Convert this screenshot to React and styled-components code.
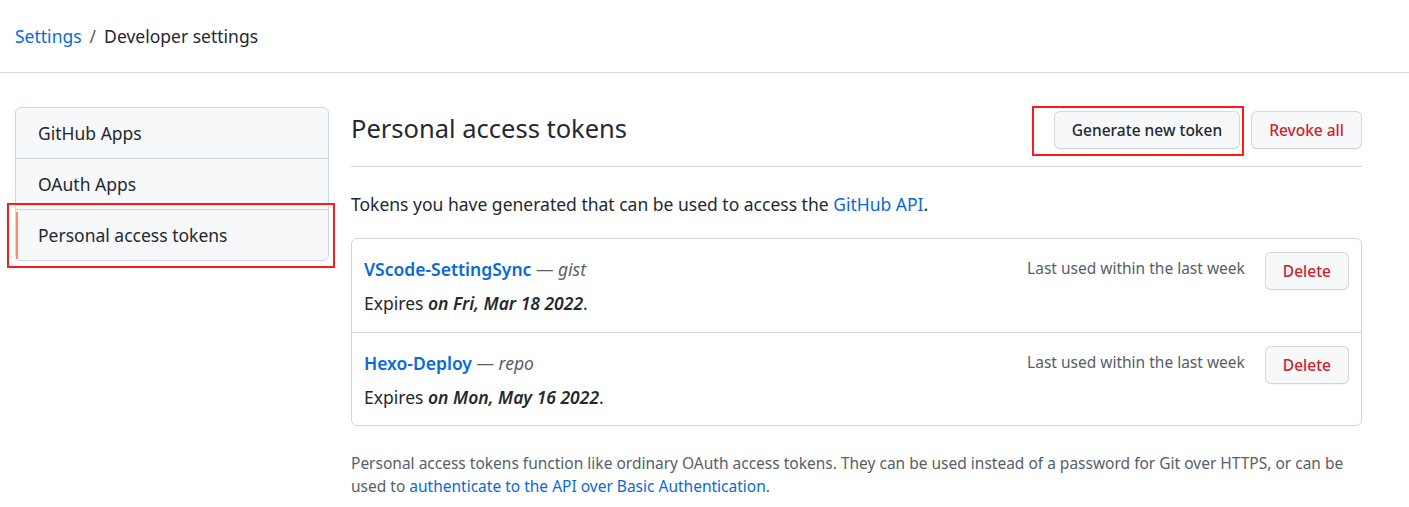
import React from 'react'
import styled, { createGlobalStyle } from 'styled-components'

const GlobalStyle = createGlobalStyle`
  body {
    margin: 0;
    background: #fff;
    font-family: "Noto Sans", "Open Sans", sans-serif;
    color: #24292f;
  }
`

const Header = styled.div`
  height: 72px;
  border-bottom: 1px solid #d0d7de;
  display: flex;
  align-items: center;
  padding-left: 15px;
  font-size: 17.5px;
`

const Crumb = styled.a`
  color: #0969da;
  text-decoration: none;
`

const Sep = styled.span`
  color: #57606a;
  margin: 0 8px;
`

const Layout = styled.div`
  display: flex;
  gap: 22px;
  padding: 34px 47px 0 15px;
`

const SideWrap = styled.div`
  position: relative;
  flex-shrink: 0;
`

const SideNav = styled.nav`
  width: 312px;
  border: 1px solid #d0d7de;
  border-radius: 6px;
  background: #f6f8fa;
`

const NavItem = styled.div`
  position: relative;
  height: 50px;
  display: flex;
  align-items: center;
  padding-left: 22px;
  font-size: 17.5px;
  color: #24292f;
  border-top: ${p => (p.$first ? 'none' : '1px solid #d0d7de')};
  &::before {
    content: '';
    display: ${p => (p.$active ? 'block' : 'none')};
    position: absolute;
    left: 0;
    top: 2px;
    bottom: 1px;
    width: 2px;
    background: #fd8c73;
  }
`

const Highlight = styled.div`
  position: absolute;
  border: 2px solid #ff1a1a;
  pointer-events: none;
`

const Main = styled.main`
  flex: 1;
  position: relative;
`

const TitleBar = styled.div`
  display: flex;
  align-items: center;
  justify-content: space-between;
  height: 59px;
  border-bottom: 1px solid #d0d7de;
`

const Title = styled.h2`
  margin: 0;
  font-size: 25.5px;
  font-weight: 400;
  position: relative;
  top: -9px;
`

const Actions = styled.div`
  display: flex;
  gap: 11px;
  position: relative;
  top: -7px;
`

const Button = styled.button`
  height: 38px;
  padding: 0 17px;
  font-family: inherit;
  font-size: 15.5px;
  font-weight: 500;
  color: ${p => (p.$danger ? '#cf222e' : '#24292f')};
  background: #f6f8fa;
  border: 1px solid rgba(27, 31, 36, 0.15);
  border-radius: 6px;
  box-shadow: 0 1px 0 rgba(27, 31, 36, 0.04);
`

const Intro = styled.p`
  margin: 25px 0 22px;
  font-size: 17.5px;
`

const Link = styled.a`
  color: #0969da;
  text-decoration: none;
`

const TokenBox = styled.div`
  border: 1px solid #d0d7de;
  border-radius: 6px;
`

const TokenRow = styled.div`
  height: 93px;
  box-sizing: border-box;
  display: flex;
  justify-content: space-between;
  padding: 13px 12px 0 12px;
  border-top: ${p => (p.$first ? 'none' : '1px solid #d0d7de')};
`

const TokenInfo = styled.div`
  display: flex;
  flex-direction: column;
  gap: 10px;
  padding-top: 5px;
`

const TokenName = styled.div`
  font-size: 17.5px;
  color: #57606a;
`

const TokenLink = styled.a`
  color: #0969da;
  font-weight: 600;
  text-decoration: none;
`

const Scope = styled.em`
  color: #57606a;
`

const Expires = styled.div`
  font-size: 17.5px;
  color: #24292f;
  em {
    font-weight: 600;
  }
`

const TokenSide = styled.div`
  display: flex;
  gap: 20px;
  align-items: flex-start;
`

const LastUsed = styled.span`
  font-size: 15.5px;
  color: #57606a;
  padding-top: 5px;
`

const Note = styled.p`
  margin: 26px 0 0;
  font-size: 15.5px;
  line-height: 23px;
  color: #57606a;
`

const tokens = [
  { name: 'VScode-SettingSync', scope: 'gist', expires: 'on Fri, Mar 18 2022' },
  { name: 'Hexo-Deploy', scope: 'repo', expires: 'on Mon, May 16 2022' },
]

export default function App() {
  return (
    <>
      <GlobalStyle />
      <Header>
        <Crumb href="#">Settings</Crumb>
        <Sep>/</Sep>
        <span>Developer settings</span>
      </Header>
      <Layout>
        <SideWrap>
          <SideNav>
            <NavItem $first>GitHub Apps</NavItem>
            <NavItem>OAuth Apps</NavItem>
            <NavItem $active>Personal access tokens</NavItem>
          </SideNav>
          <Highlight style={{ left: -8, top: 96, width: 324, height: 61 }} />
        </SideWrap>
        <Main>
          <TitleBar>
            <Title>Personal access tokens</Title>
            <Actions>
              <Button>Generate new token</Button>
              <Button $danger>Revoke all</Button>
            </Actions>
          </TitleBar>
          <Highlight style={{ left: 681, top: -1, width: 208, height: 46 }} />
          <Intro>
            Tokens you have generated that can be used to access the <Link href="#">GitHub API</Link>.
          </Intro>
          <TokenBox>
            {tokens.map((t, i) => (
              <TokenRow key={t.name} $first={i === 0}>
                <TokenInfo>
                  <TokenName>
                    <TokenLink href="#">{t.name}</TokenLink> — <Scope>{t.scope}</Scope>
                  </TokenName>
                  <Expires>
                    Expires <em>{t.expires}</em>.
                  </Expires>
                </TokenInfo>
                <TokenSide>
                  <LastUsed>Last used within the last week</LastUsed>
                  <Button $danger>Delete</Button>
                </TokenSide>
              </TokenRow>
            ))}
          </TokenBox>
          <Note>
            Personal access tokens function like ordinary OAuth access tokens. They can be used instead of a password for Git over HTTPS, or can be used to{' '}
            <Link href="#">authenticate to the API over Basic Authentication</Link>.
          </Note>
        </Main>
      </Layout>
    </>
  )
}
